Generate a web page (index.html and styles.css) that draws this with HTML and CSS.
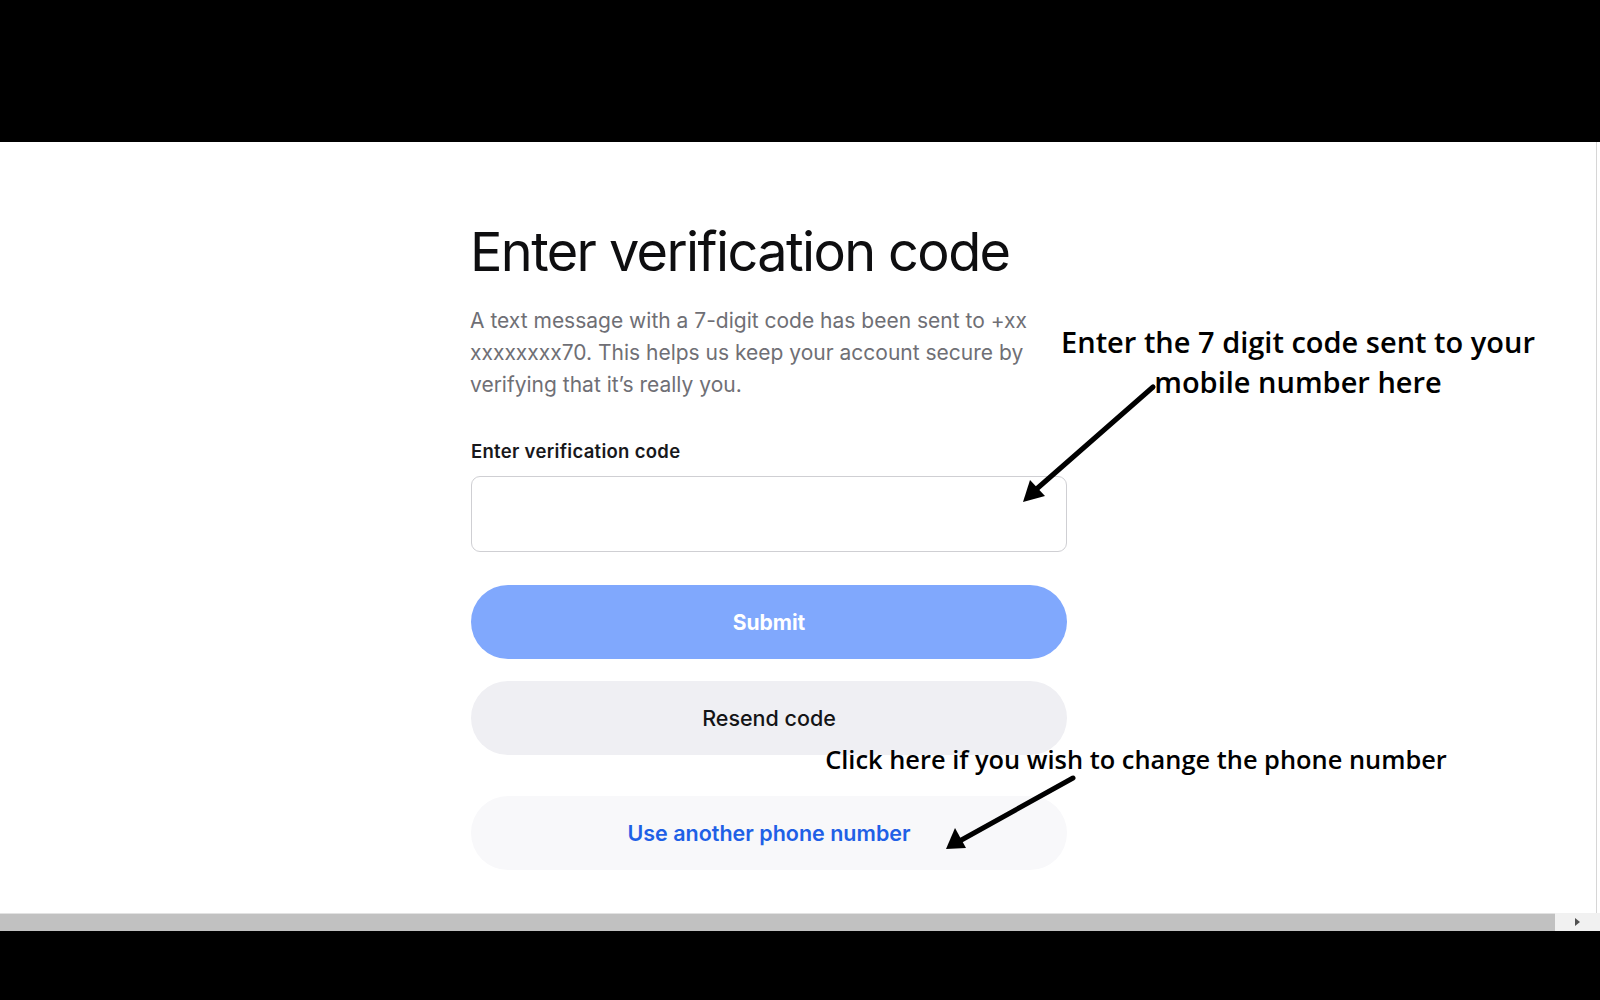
FILE: index.html
```html
<!DOCTYPE html>
<html lang="en">
<head>
<meta charset="utf-8">
<title>Enter verification code</title>
<link rel="stylesheet" href="styles.css">
</head>
<body>
<div class="screen">
  <div class="top-bar"></div>
  <div class="viewport">
    <div class="page">
      <main class="form">
        <h1 class="title">Enter verification code</h1>
        <p class="lead">A text message with a 7-digit code has been sent to +xx xxxxxxxx70. This helps us keep your account secure by verifying that it’s really you.</p>
        <label class="label" for="code">Enter verification code</label>
        <input class="input" id="code" type="text">
        <button class="btn btn-primary" type="button">Submit</button>
        <button class="btn btn-secondary" type="button">Resend code</button>
        <button class="btn btn-link" type="button">Use another phone number</button>
      </main>
      <div class="vscroll"></div>
    </div>
    <div class="note note-code">Enter the 7 digit code sent to your<br>mobile number here</div>
    <div class="note note-phone">Click here if you wish to change the phone number</div>
    <svg class="arrows" width="1600" height="771" viewBox="0 0 1600 771" xmlns="http://www.w3.org/2000/svg">
      <g stroke="#000" stroke-width="5" stroke-linecap="round" fill="none">
        <line x1="1153" y1="245" x2="1032" y2="351"/>
        <line x1="1073" y1="636" x2="956" y2="701"/>
      </g>
      <polygon points="1023,360 1030,338 1045,354" fill="#000"/>
      <polygon points="946,707 955,686 966,706" fill="#000"/>
    </svg>
  </div>
  <div class="hscroll">
    <div class="hscroll-track"></div>
    <div class="hscroll-btn"><span class="hscroll-arrow"></span></div>
  </div>
  <div class="bottom-bar"></div>
</div>
</body>
</html>
```
FILE: styles.css
```css
html, body {
  margin: 0;
  padding: 0;
  background: #000;
}
.screen {
  width: 1600px;
  height: 1000px;
  display: flex;
  flex-direction: column;
  background: #000;
}
.top-bar {
  height: 142px;
  flex: none;
}
.viewport {
  position: relative;
  height: 771px;
  flex: none;
  background: #fff;
  overflow: hidden;
}
.page {
  display: flex;
  height: 100%;
}
.form {
  flex: 1;
  display: flex;
  flex-direction: column;
  align-items: flex-start;
  padding: 78px 0 0 471px;
  font-family: Inter, "Noto Sans", sans-serif;
}
.title {
  margin: 0 0 0 -1px;
  font-size: 54px;
  font-weight: 400;
  letter-spacing: -1.6px;
  line-height: 64px;
  color: #0e0e10;
}
.lead {
  margin: 21px 0 0 -1px;
  width: 600px;
  font-size: 21px;
  line-height: 32px;
  color: #6f6f75;
  letter-spacing: 0;
}
.label {
  margin: 38px 0 0 0;
  font-size: 18.5px;
  font-weight: 600;
  line-height: 24px;
  color: #18181b;
  letter-spacing: 0.3px;
}
.input {
  box-sizing: border-box;
  margin-top: 13px;
  width: 596px;
  height: 76px;
  border: 1.5px solid #cfcfd3;
  border-radius: 9px;
  background: #fff;
}
.btn {
  box-sizing: border-box;
  width: 596px;
  height: 74px;
  border: none;
  border-radius: 37px;
  font-family: Inter, "Noto Sans", sans-serif;
  font-size: 21.5px;
  letter-spacing: 0;
}
.btn-primary {
  margin-top: 33px;
  background: #80a8fd;
  color: #fff;
  font-weight: 700;
  font-size: 21px;
}
.btn-secondary {
  margin-top: 22px;
  background: #efeff3;
  color: #141416;
  font-weight: 500;
}
.btn-link {
  margin-top: 41px;
  background: #f8f8fa;
  color: #1f60e6;
  font-weight: 600;
}
.vscroll {
  width: 3px;
  flex: none;
  background: #fff;
  border-left: 1px solid #d6d6d6;
}
.note {
  position: absolute;
  font-family: "Open Sans", sans-serif;
  font-weight: 600;
  color: #000;
  text-align: center;
  white-space: nowrap;
}
.note-code {
  left: 1050px;
  top: 180px;
  width: 496px;
  font-size: 29px;
  line-height: 40px;
}
.note-phone {
  left: 812px;
  top: 600px;
  width: 648px;
  font-size: 25.4px;
  line-height: 34px;
}
.arrows {
  position: absolute;
  left: 0;
  top: 0;
}
.hscroll {
  height: 18px;
  flex: none;
  display: flex;
  background: #c1c1c1;
}
.hscroll-track {
  flex: 1;
  background: #c1c1c1;
  border-top: 1px solid #e2e2e2;
}
.hscroll-btn {
  width: 45px;
  background: #f1f1f1;
  display: flex;
  align-items: center;
  justify-content: center;
}
.hscroll-arrow {
  width: 0;
  height: 0;
  border-top: 4px solid transparent;
  border-bottom: 4px solid transparent;
  border-left: 5px solid #505050;
}
.bottom-bar {
  flex: 1;
}
```
